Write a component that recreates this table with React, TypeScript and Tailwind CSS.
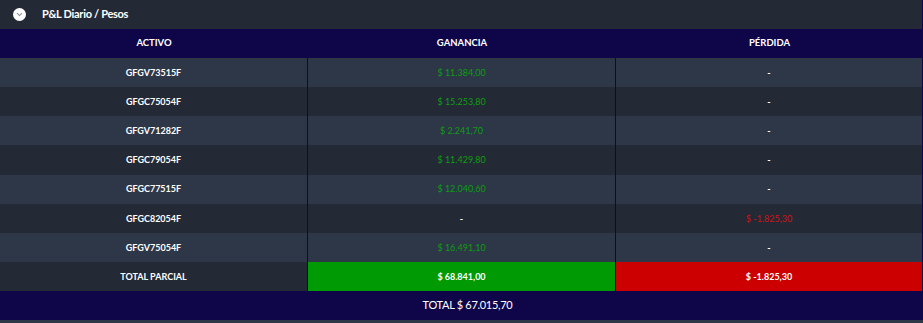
import React from "react";

const rows: { a: string; g: string | null; p: string | null }[] = [
  { a: "GFGV73515F", g: "$ 11.384,00", p: null },
  { a: "GFGC75054F", g: "$ 15.253,80", p: null },
  { a: "GFGV71282F", g: "$ 2.241,70", p: null },
  { a: "GFGC79054F", g: "$ 11.429,80", p: null },
  { a: "GFGC77515F", g: "$ 12.040,60", p: null },
  { a: "GFGC82054F", g: null, p: "$ -1.825,30" },
  { a: "GFGV75054F", g: "$ 16.491,10", p: null },
];

export default function App() {
  return (
    <div
      className="w-[923px] h-[323px] bg-[#2d3748] text-white overflow-hidden"
      style={{ fontFamily: "Lato, 'Open Sans', sans-serif" }}
    >
      <div className="h-[29px] flex items-center bg-[#232a36] border-r border-[#0f064a]">
        <div className="ml-[13px] w-[13px] h-[13px] rounded-full bg-white flex items-center justify-center">
          <svg width="7" height="5" viewBox="0 0 7 5">
            <path d="M1 1.2 L3.5 3.6 L6 1.2" fill="none" stroke="#8a8f99" strokeWidth="1.1" />
          </svg>
        </div>
        <span className="ml-[16px] text-[11px] font-bold tracking-[-0.3px]">P&amp;L Diario / Pesos</span>
      </div>
      <div className="grid grid-cols-[308px_308px_307px] h-[29px] bg-[#0f064a] text-[9.5px] font-bold items-center text-center">
        <div>ACTIVO</div>
        <div>GANANCIA</div>
        <div>PÉRDIDA</div>
      </div>
      {rows.map((r, i) => (
        <div
          key={r.a}
          className={`grid grid-cols-[308px_308px_307px] h-[29.15px] text-[9px] text-center ${
            i % 2 === 0 ? "bg-[#2d3748]" : "bg-[#232a36]"
          }`}
        >
          <div className="flex items-center justify-center border-r border-[#0f064a] font-bold">{r.a}</div>
          <div className="flex items-center justify-center border-r border-[#0f064a]">
            {r.g ? <span className="text-[#0e9e0e]">{r.g}</span> : <span className="font-bold">-</span>}
          </div>
          <div className="flex items-center justify-center border-r border-[#0f064a]">
            {r.p ? <span className="text-[#d01212]">{r.p}</span> : <span className="font-bold">-</span>}
          </div>
        </div>
      ))}
      <div className="grid grid-cols-[308px_308px_307px] h-[29.15px] text-[9px] font-bold text-center bg-[#232a36]">
        <div className="flex items-center justify-center border-r border-[#0f064a]">TOTAL PARCIAL</div>
        <div className="flex items-center justify-center border-r border-[#0f064a] bg-[#009a05]">$ 68.841,00</div>
        <div className="flex items-center justify-center border-r border-[#0f064a] bg-[#cc0000]">$ -1.825,30</div>
      </div>
      <div className="h-[29px] bg-[#0f064a] flex items-center justify-center pl-[12px] text-[11px] tracking-[-0.3px]">
        TOTAL $ 67.015,70
      </div>
    </div>
  );
}
